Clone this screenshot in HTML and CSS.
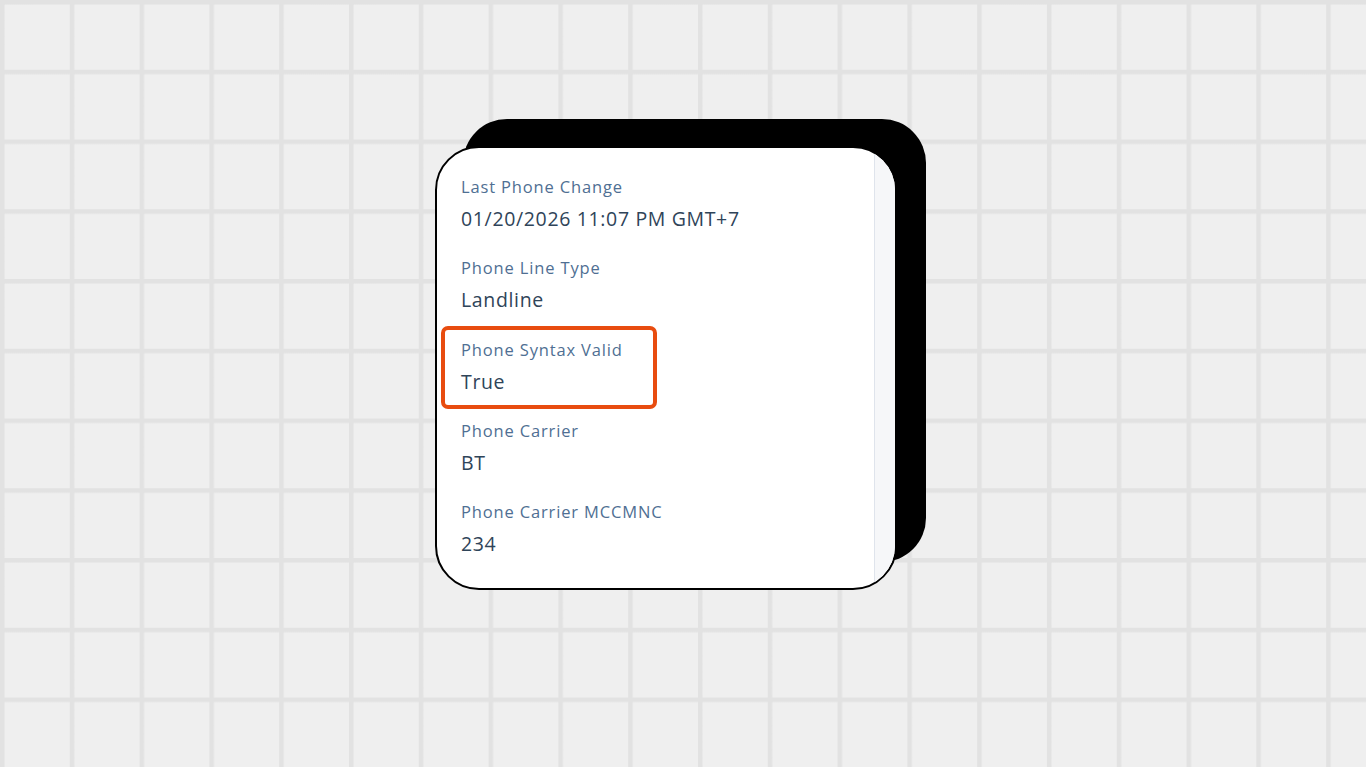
FILE: index.html
```html
<!DOCTYPE html>
<html lang="en">
<head>
<meta charset="utf-8">
<title>Phone properties</title>
<link rel="stylesheet" href="styles.css">
</head>
<body>
<div class="stage">
  <div class="stack">
    <div class="back-card"></div>
    <div class="card">
      <div class="content">
        <div class="item">
          <div class="label">Last Phone Change</div>
          <div class="value">01/20/2026 11:07 PM GMT+7</div>
        </div>
        <div class="item">
          <div class="label">Phone Line Type</div>
          <div class="value">Landline</div>
        </div>
        <div class="item highlighted">
          <div class="label">Phone Syntax Valid</div>
          <div class="value">True</div>
        </div>
        <div class="item">
          <div class="label">Phone Carrier</div>
          <div class="value">BT</div>
        </div>
        <div class="item">
          <div class="label">Phone Carrier MCCMNC</div>
          <div class="value">234</div>
        </div>
      </div>
      <div class="scroll-strip"></div>
    </div>
  </div>
</div>
</body>
</html>
```

FILE: styles.css
```css
html, body {
  margin: 0;
  padding: 0;
  width: 100%;
  height: 100%;
  overflow: hidden;
}

body {
  background-color: #efefef;
  background-image:
    linear-gradient(90deg, #e2e2e2 0, #e2e2e2 4px, rgba(226,226,226,0) 5px),
    linear-gradient(180deg, #e2e2e2 0, #e2e2e2 4px, rgba(226,226,226,0) 5px);
  background-size: 69.8px 69.75px;
  font-family: "Open Sans", "Noto Sans", sans-serif;
}

.stage {
  width: 1366px;
  height: 767px;
  padding: 119px 0 0 435px;
  box-sizing: border-box;
}

.stack {
  position: relative;
  width: 491px;
  height: 471px;
}

.back-card {
  position: absolute;
  left: 28px;
  top: 0;
  width: 463px;
  height: 443px;
  background: #000;
  border-radius: 44px;
}

.card {
  position: absolute;
  left: 0;
  top: 27px;
  width: 462px;
  height: 444px;
  box-sizing: border-box;
  background: #fff;
  border: 2px solid #000;
  border-radius: 44px;
  overflow: hidden;
  display: flex;
}

.content {
  flex: 1;
  padding: 28px 0 0 24px;
  display: flex;
  flex-direction: column;
  gap: 25.3px;
}

.item {
  display: flex;
  flex-direction: column;
  gap: 8px;
}

.label {
  font-size: 16.5px;
  line-height: 22px;
  color: #4f6f93;
  letter-spacing: 0.85px;
}

.value {
  font-size: 19.5px;
  line-height: 26px;
  color: #2f4459;
  letter-spacing: 0.65px;
}

.highlighted {
  position: relative;
}

.highlighted::after {
  content: "";
  position: absolute;
  left: -20px;
  top: -13px;
  width: 216px;
  height: 83px;
  box-sizing: border-box;
  border: 4.5px solid #e84c0f;
  border-radius: 7px;
}

.scroll-strip {
  width: 20px;
  flex: none;
  background: #f6f7f9;
  border-left: 1px solid #dfe4ec;
}
```
